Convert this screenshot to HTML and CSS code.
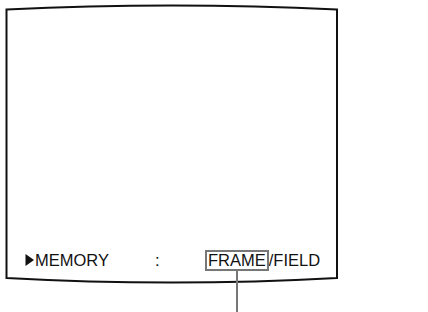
FILE: index.html
```html
<!DOCTYPE html>
<html>
<head>
<meta charset="utf-8">
<link rel="stylesheet" href="styles.css">
</head>
<body>
<div class="screen">
  <svg class="outline" width="428" height="312" viewBox="0 0 428 312">
    <path d="M6.5,9.5 Q172,1.5 337,9.5 L337,278 Q172,287 6.5,278 Z" fill="none" stroke="#111" stroke-width="2"/>
  </svg>
  <div class="menu-row">
    <span class="item">
      <svg class="marker" width="9" height="12" viewBox="0 0 9 12"><polygon points="0.5,0 9,6 0.5,12" fill="#111"/></svg>
      <span class="label">MEMORY</span>
    </span>
    <span class="sep">:</span>
    <span class="options"><span class="selected">FRAME</span>/FIELD</span>
  </div>
</div>
</body>
</html>
```
FILE: styles.css
```css
html, body {
  margin: 0;
  padding: 0;
  background: #fff;
}
.screen {
  position: relative;
  width: 428px;
  height: 312px;
  overflow: hidden;
  box-sizing: border-box;
  padding-top: 250px;
  font-family: "Liberation Sans", Arial, sans-serif;
  font-size: 16.5px;
  color: #111;
}
.outline {
  position: absolute;
  left: 0;
  top: 0;
}
.menu-row {
  position: relative;
  display: flex;
  align-items: baseline;
  padding-left: 25px;
  line-height: 17px;
}
.item {
  display: flex;
  align-items: baseline;
  width: 130px;
}
.marker {
  margin-right: 1px;
}
.sep {
  width: 50px;
}
.options {
  display: flex;
  align-items: baseline;
}
.selected {
  position: relative;
  border: 2px solid #777;
  padding: 0 1px;
  line-height: 17px;
}
.selected::after {
  content: "";
  position: absolute;
  left: 29px;
  top: 100%;
  margin-top: 2px;
  width: 2px;
  height: 45px;
  background: #777;
}
```
